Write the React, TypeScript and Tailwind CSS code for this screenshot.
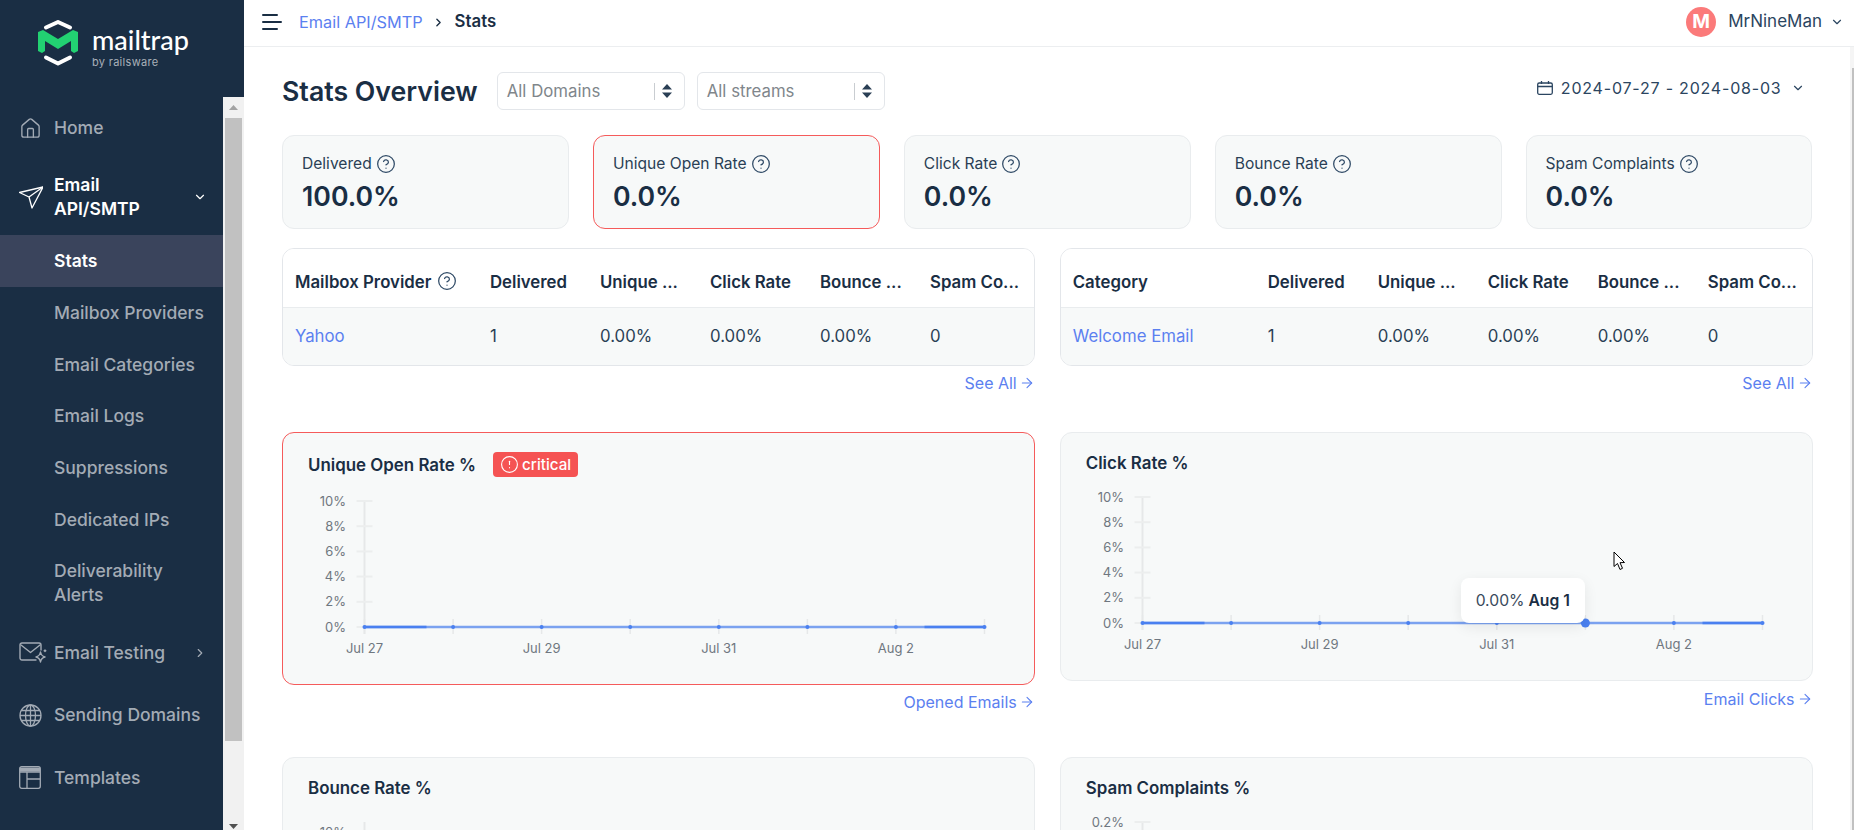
import React from 'react'
import { ArrowRight, ChevronDown, ChevronRight, CircleAlert, CircleHelp, House } from 'lucide-react'

const Logo = () => (
  <svg width="42" height="46" viewBox="0 0 42 46" fill="none">
    <path d="M9 7.5 L21 2 L33 7.5" stroke="#fff" strokeWidth="4" strokeLinejoin="round" strokeLinecap="round" />
    <path d="M9 37.5 L21 43.5 L33 37.5" stroke="#fff" strokeWidth="4" strokeLinejoin="round" strokeLinecap="round" />
    <path d="M1 12 L6 10 L21 19 L36 10 L41 12 V31 L37 33 L34 31 V21 L21 29 L8 21 V31 L5 33 L1 31 Z" fill="#22d172" />
  </svg>
)

const PlaneIcon = () => (
  <svg width="24" height="24" viewBox="0 0 24 24" fill="none" stroke="#fff" strokeWidth="1.3" strokeLinejoin="round">
    <path d="M0.5 7.5 L24 2 L13 23 L10 12 Z" />
    <path d="M10 12 L24 2" />
  </svg>
)

const EnvelopeIcon = () => (
  <svg width="28" height="22" viewBox="0 0 28 22" fill="none" stroke="#a3abb5" strokeWidth="1.4" strokeLinejoin="round" strokeLinecap="round">
    <path d="M17 18 H3 a2 2 0 0 1 -2 -2 V3 a2 2 0 0 1 2 -2 H20 a2 2 0 0 1 2 2 V8" />
    <path d="M2 3 L11.5 10.5 L21 3" />
    <path d="M21.5 10 C22 13 23 14.2 26 15 C23 15.8 22 17 21.5 20 C21 17 20 15.8 17 15 C20 14.2 21 13 21.5 10 Z" />
    <path d="M26 8 v1.5 M25.2 8.7 h1.6" />
  </svg>
)

const GlobeIcon = () => (
  <svg width="23" height="23" viewBox="0 0 23 23" fill="none" stroke="#a3abb5" strokeWidth="1.3">
    <circle cx="11.5" cy="11.5" r="10.5" />
    <ellipse cx="11.5" cy="11.5" rx="5" ry="10.5" />
    <path d="M11.5 1 V22 M1 11.5 H22 M2.4 6.5 H20.6 M2.4 16.5 H20.6" />
  </svg>
)

const TemplateIcon = () => (
  <svg width="22" height="23" viewBox="0 0 22 23" fill="none" stroke="#a3abb5" strokeWidth="1.3">
    <rect x="0.7" y="0.7" width="20.6" height="21.6" rx="2" />
    <path d="M1 3.5 H21" strokeWidth="4" />
    <path d="M1 6 H21 M8 6 V22 M8 13 H21" />
  </svg>
)

const SideRow = ({ label, icon, right, sub, active, narrow, className }: {
  label: string
  icon?: React.ReactNode
  right?: React.ReactNode
  sub?: boolean
  active?: boolean
  narrow?: boolean
  className: string
}) => (
  <div className={`flex items-center pl-[19px] pr-[16px] text-[17.5px] leading-[24px] ${active ? 'text-white font-semibold' : 'text-[#a3abb5] font-medium'} ${sub && active ? 'bg-[#3a445c]' : ''} ${className}`}>
    <div className="w-[35px] shrink-0 flex items-center">{icon}</div>
    <div className={narrow ? 'w-[120px]' : ''}>{label}</div>
    <div className="ml-auto">{right}</div>
  </div>
)

const Sidebar = () => (
  <aside className="w-[244px] shrink-0 h-full bg-[#1a2e44] flex flex-col">
    <div className="h-[97px] shrink-0 flex items-start pl-[37px] pt-[20px] gap-[13px]">
      <Logo />
      <div className="pt-[6px]">
        <div className="text-white text-[27px] leading-[27px] font-medium [font-family:Lato,sans-serif]">mailtrap</div>
        <div className="text-[#a9b0b9] text-[11px] leading-[13px] tracking-[0.3px] mt-[3px]">by railsware</div>
      </div>
    </div>
    <div className="flex flex-1 min-h-0">
      <nav className="w-[223px] shrink-0 overflow-hidden">
        <SideRow className="h-[62px]" label="Home" icon={<House size={23} strokeWidth={1.4} color="#a3abb5" />} />
        <SideRow className="h-[76px]" label="Email API/SMTP" narrow active icon={<PlaneIcon />} right={<ChevronDown size={14} color="#fff" />} />
        <SideRow className="h-[52px]" label="Stats" sub active />
        <SideRow className="h-[51.7px]" label="Mailbox Providers" sub />
        <SideRow className="h-[51.7px]" label="Email Categories" sub />
        <SideRow className="h-[51.7px]" label="Email Logs" sub />
        <SideRow className="h-[51.7px]" label="Suppressions" sub />
        <SideRow className="h-[51.7px]" label="Dedicated IPs" sub />
        <SideRow className="h-[76px]" label="Deliverability Alerts" narrow sub />
        <SideRow className="h-[62.5px]" label="Email Testing" icon={<EnvelopeIcon />} right={<ChevronRight size={14} color="#a3abb5" />} />
        <SideRow className="h-[62.5px]" label="Sending Domains" icon={<GlobeIcon />} />
        <SideRow className="h-[62.5px]" label="Templates" icon={<TemplateIcon />} />
      </nav>
      <div className="w-[21px] bg-[#f1f1f1] flex flex-col">
        <div className="h-[21px] shrink-0 flex items-center justify-center">
          <svg width="9" height="5" viewBox="0 0 9 5"><path d="M4.5 0 L9 5 H0 Z" fill="#a3a3a3" /></svg>
        </div>
        <div className="h-[623px] mx-[2px] bg-[#c1c1c1]" />
        <div className="flex-1 flex items-end justify-center pb-[1px]">
          <svg width="9" height="5" viewBox="0 0 9 5"><path d="M0 0 H9 L4.5 5 Z" fill="#505050" /></svg>
        </div>
      </div>
    </div>
  </aside>
)

const Header = () => (
  <header className="h-[47px] shrink-0 border-b border-[#eceef0] flex items-center pl-[18px] pr-[10px] pb-[2px] text-[16.3px]">
    <svg width="20" height="16" viewBox="0 0 20 16" fill="none" stroke="#1a2e44" strokeWidth="2" strokeLinecap="round" className="mr-[17px]">
      <path d="M1 1 H15 M1 8 H19 M1 15 H15" />
    </svg>
    <span className="text-[#5b80f0]">Email API/SMTP</span>
    <ChevronRight size={13} strokeWidth={2.5} color="#1a2e44" className="ml-[9px] mr-[10px]" />
    <span className="text-[#1a2e44] font-semibold text-[16.8px]">Stats</span>
    <div className="ml-auto flex items-center">
      <div className="w-[30px] h-[30px] rounded-full bg-[#fb7a7a] text-white font-bold text-[19px] flex items-center justify-center">M</div>
      <span className="ml-[12px] text-[#2b4560] text-[17px]">MrNineMan</span>
      <ChevronDown size={14} color="#2b4560" className="ml-[8px]" />
    </div>
  </header>
)

const Arrows = () => (
  <svg width="10" height="14" viewBox="0 0 10 14" fill="#2a3f55">
    <path d="M5 0 L10 5.5 H0 Z M0 8.5 H10 L5 14 Z" />
  </svg>
)

const Select = ({ label }: { label: string }) => (
  <div className="w-[188px] h-[38px] border border-[#e3e6ea] rounded-md flex items-center pl-[9px] pr-[12px] text-[16.8px] text-[#80868b]">
    <span className="flex-1 pt-[2px]">{label}</span>
    <div className="w-px h-[17px] bg-[#c9cdd1] mr-[7px]" />
    <Arrows />
  </div>
)

const StatCard = ({ label, value, alert }: { label: string; value: string; alert?: boolean }) => (
  <div className={`h-[94px] rounded-xl border bg-[#f7f9f9] px-[19px] pt-[17px] ${alert ? 'border-[#f55b5b]' : 'border-[#e9ecee]'}`}>
    <div className="flex items-center gap-[4px] text-[15.6px] leading-[22px] text-[#2a3f55]">
      {label}
      <CircleHelp size={20} strokeWidth={1.5} color="#2f4a66" />
    </div>
    <div className="text-[26.7px] leading-[34px] mt-[4px] font-semibold text-[#1a2e44]">{value}</div>
  </div>
)

const MoreLink = ({ label }: { label: string }) => (
  <div className="flex justify-end items-center gap-[2px] text-[16px] leading-[24px] text-[#5b80f0]">
    {label}
    <ArrowRight size={16} strokeWidth={1.6} />
  </div>
)

const cols = 'grid grid-cols-[194px_110px_110px_110px_110px_1fr]'

const TopTable = ({ title, link, help }: { title: string; link: string; help?: boolean }) => (
  <div>
    <div className="h-[118px] rounded-xl border border-[#e3e6ea] overflow-hidden text-[16.8px]">
      <div className={`${cols} h-[59px] pt-[9px] items-center font-semibold text-[#1a2e44] border-b border-[#e9ecee] bg-white`}>
        <div className="pl-3 flex items-center gap-[6px]">
          {title}
          {help && <CircleHelp size={20} strokeWidth={1.5} color="#2f4a66" className="-mt-1" />}
        </div>
        <div className="pl-[13px]">Delivered</div>
        <div className="pl-[13px]">Unique ...</div>
        <div className="pl-[13px]">Click Rate</div>
        <div className="pl-[13px]">Bounce ...</div>
        <div className="pl-[13px]">Spam Co...</div>
      </div>
      <div className={`${cols} h-[57px] items-center bg-[#f7f9f9] text-[#2a3f55]`}>
        <div className="pl-3 text-[#5b80f0]">{link}</div>
        <div className="pl-[13px]">1</div>
        <div className="pl-[13px]">0.00%</div>
        <div className="pl-[13px]">0.00%</div>
        <div className="pl-[13px]">0.00%</div>
        <div className="pl-[13px]">0</div>
      </div>
    </div>
    <div className="mt-[5px]">
      <MoreLink label="See All" />
    </div>
  </div>
)

const xs = [56.5, 145.1, 233.6, 322.2, 410.8, 499.4, 587.9, 676.5]

const Chart = ({ labels, top = 24, hover }: { labels: string[]; top?: number; hover?: number }) => {
  const step = (150 - top) / (labels.length - 1)
  return (
    <svg width="700" height="187" viewBox="0 0 700 187" className="block">
      <line x1="56.5" x2="56.5" y1="24" y2="157" stroke="#e6e8e9" strokeWidth="2" />
      {labels.map((l, i) => {
        const y = top + i * step
        return (
          <g key={l}>
            <line x1="48.5" x2="64.5" y1={y} y2={y} stroke="#eceeee" strokeWidth="2" />
            <text x="38" y={y + 4.5} textAnchor="end" fontSize="13" fill="#6f7780">{l}</text>
          </g>
        )
      })}
      {xs.map(x => (
        <line key={x} x1={x} x2={x} y1="142" y2="157" stroke="#e6e8e9" strokeWidth="1.5" />
      ))}
      <line x1="56.5" x2="676.5" y1="150" y2="150" stroke="#7ba2f0" strokeWidth="2.4" />
      <line x1="56.5" x2="118.5" y1="150" y2="150" stroke="#4a80f0" strokeWidth="2.4" />
      <line x1="616.5" x2="676.5" y1="150" y2="150" stroke="#4a80f0" strokeWidth="2.4" />
      {xs.map((x, i) => (
        <circle key={x} cx={x} cy="150" r={hover === i ? 4.5 : 2} fill="#4a80f0" />
      ))}
      {['Jul 27', 'Jul 29', 'Jul 31', 'Aug 2'].map((d, i) => (
        <text key={d} x={xs[i * 2]} y="176" textAnchor="middle" fontSize="13" fill="#6f7780">{d}</text>
      ))}
    </svg>
  )
}

const ChartCard = ({ title, labels, top, alert, link, hover, children }: {
  title: string
  labels: string[]
  top?: number
  alert?: boolean
  link?: string
  hover?: number
  children?: React.ReactNode
}) => (
  <div>
    <div className={`relative rounded-xl border bg-[#f7f9f9] px-[25px] pt-[19px] pb-[20px] ${alert ? 'border-[#f55b5b]' : 'border-[#e9ecee]'}`}>
      <div className="flex items-center gap-[17px] text-[16.9px] leading-[19px] font-semibold text-[#1a2e44]">
        <span className="pt-[2px]">{title}</span>
        {alert && (
          <div className="h-[25px] w-[85px] rounded-[4px] bg-[#f55353] flex items-center gap-[3px] pl-[7px] text-white font-medium text-[15.2px]">
            <CircleAlert size={19} strokeWidth={1.4} />
            critical
          </div>
        )}
      </div>
      <Chart labels={labels} top={top} hover={hover} />
      {children}
    </div>
    {link && (
      <div className={alert ? 'mt-[5px]' : 'mt-[6px]'}>
        <MoreLink label={link} />
      </div>
    )}
  </div>
)

const pct = ['10%', '8%', '6%', '4%', '2%', '0%']

const Content = () => (
  <div className="flex-1 min-w-0 overflow-hidden pl-[38px] pr-[37.5px] pt-[25px]">
    <div className="flex items-center h-[38px]">
      <h1 className="text-[26.7px] font-semibold text-[#1a2e44] mr-[19px]">Stats Overview</h1>
      <div className="flex gap-[12px]">
        <Select label="All Domains" />
        <Select label="All streams" />
      </div>
      <div className="ml-auto pr-[8px] pb-[6px] flex items-center text-[16px] tracking-[0.8px] text-[#2b4560]">
        <svg width="16" height="14" viewBox="0 0 16 14" fill="none" stroke="#2b4560" strokeWidth="1.3" className="mr-[8px]">
          <rect x="0.7" y="2" width="14.6" height="11.3" rx="1.5" />
          <path d="M1 5.5 H15 M4.5 0 V3 M11.5 0 V3" />
        </svg>
        2024-07-27 - 2024-08-03
        <ChevronDown size={14} className="ml-[9px]" />
      </div>
    </div>
    <div className="grid grid-cols-5 gap-[24px] mt-[25px]">
      <StatCard label="Delivered" value="100.0%" />
      <StatCard label="Unique Open Rate" value="0.0%" alert />
      <StatCard label="Click Rate" value="0.0%" />
      <StatCard label="Bounce Rate" value="0.0%" />
      <StatCard label="Spam Complaints" value="0.0%" />
    </div>
    <div className="grid grid-cols-2 gap-[25px] mt-[19px]">
      <TopTable title="Mailbox Provider" link="Yahoo" help />
      <TopTable title="Category" link="Welcome Email" />
    </div>
    <div className="grid grid-cols-2 gap-x-[25px] gap-y-[43px] items-start mt-[37px]">
      <ChartCard title="Unique Open Rate %" labels={pct} alert link="Opened Emails" />
      <ChartCard title="Click Rate %" labels={pct} link="Email Clicks" hover={5}>
        <div className="absolute left-[400px] top-[145px] w-[124px] h-[45px] bg-white rounded-lg shadow-[0_4px_14px_rgba(0,0,0,0.08)] flex items-center justify-center gap-[4px] text-[15.7px] text-[#3a4a5c]">
          0.00% <span className="font-semibold text-[#1a2e44]">Aug 1</span>
        </div>
        <svg width="13" height="20" viewBox="0 0 13 20" className="absolute left-[552px] top-[118px]">
          <path d="M1 1 V15.5 L4.5 12.5 L7 18.5 L9.5 17.3 L7 11.7 L11.5 11.5 Z" fill="#fff" stroke="#000" strokeWidth="1" />
        </svg>
      </ChartCard>
      <ChartCard title="Bounce Rate %" labels={pct} top={34} />
      <ChartCard title="Spam Complaints %" labels={['0.2%', '0.15%', '0.1%', '0.05%', '0%']} top={24} />
    </div>
  </div>
)

export default function App() {
  return (
    <div className="flex h-screen overflow-hidden bg-white text-[#1a2e44] [font-family:Inter,sans-serif]">
      <Sidebar />
      <main className="flex-1 min-w-0 flex flex-col">
        <Header />
        <div className="flex flex-1 min-h-0">
          <Content />
          <div className="w-[4px] shrink-0 bg-[#f5f5f5] pl-[2px] pt-[21px]">
            <div className="h-full bg-[#c1c1c1]" />
          </div>
        </div>
      </main>
    </div>
  )
}
